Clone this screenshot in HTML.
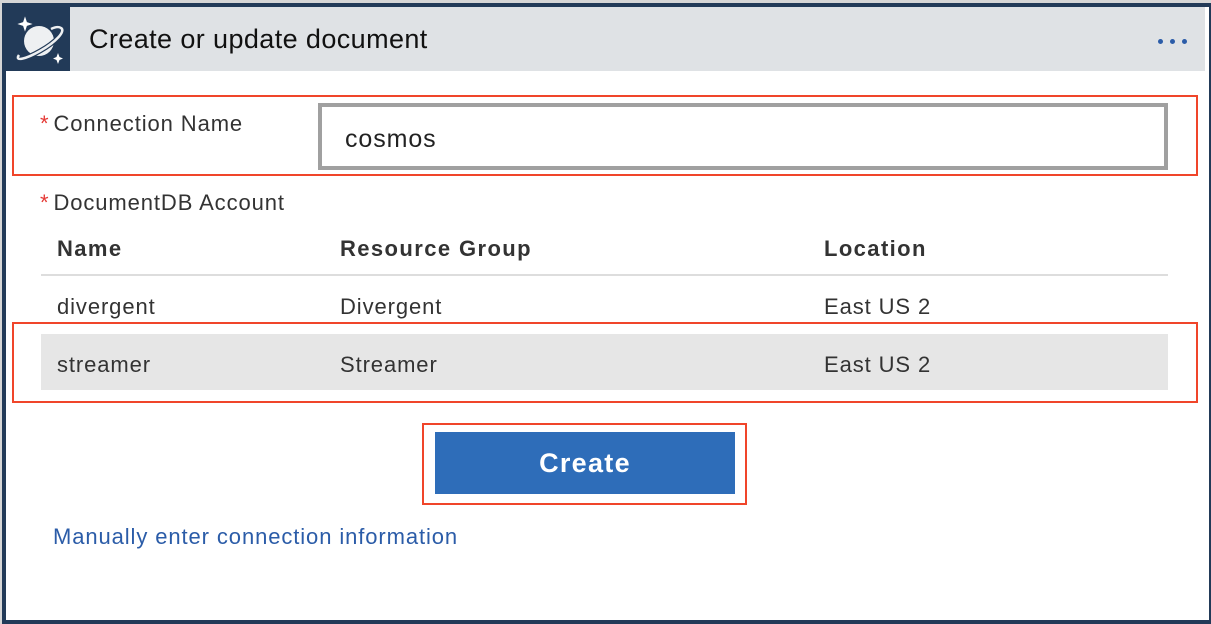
<!DOCTYPE html>
<html><head><meta charset="utf-8"><style>
body{margin:0;width:1211px;height:623px;background:#d6d6d6;position:relative;overflow:hidden;font-family:"Liberation Sans",sans-serif;}
.frame{position:absolute;left:2px;top:3px;width:1203px;height:613px;border:4px solid #223a58;background:#fff;}
.abs{position:absolute;}
.t{position:absolute;color:#333;font-size:22px;white-space:nowrap;letter-spacing:0.9px;}
.b{font-weight:bold;letter-spacing:1.4px;}
.red{position:absolute;border:2px solid #f0452a;}
.star{color:#e53935;margin-right:4px;}
</style></head><body>
<div class="frame"></div>
<div class="abs" style="left:6px;top:7px;width:64px;height:64px;background:#223a58;">
<svg width="64" height="64" viewBox="0 0 64 64">
<circle cx="33" cy="34" r="15" fill="#eef0f2"/>
<path d="M13 48 C8 55 20 52 34 44 C50 35 60 24 55 21" fill="none" stroke="#223a58" stroke-width="5"/>
<path d="M13 48 C8 55 20 52 34 44 C50 35 60 24 55 21 C52 19 47 21 45 22" fill="none" stroke="#eef0f2" stroke-width="2.5"/>
<path d="M20 12 L22 18 L28 20 L22 22 L20 28 L18 22 L12 20 L18 18Z" fill="#fff" transform="translate(0,-2) scale(0.95)"/>
<path d="M52 46 L53.5 50 L57 51.5 L53.5 53 L52 57 L50.5 53 L47 51.5 L50.5 50Z" fill="#fff"/>
</svg></div>
<div class="abs" style="left:70px;top:7px;width:1135px;height:64px;background:#dfe2e5;"></div>
<div class="t" style="left:89px;top:24px;font-size:27px;color:#111;letter-spacing:0.4px;">Create or update document</div>
<div class="abs" style="left:1158px;top:39px;width:5px;height:5px;border-radius:50%;background:#2b5ca8;box-shadow:12px 0 #2b5ca8,24px 0 #2b5ca8;"></div>

<div class="red" style="left:12px;top:95px;width:1182px;height:77px;"></div>
<div class="t" style="left:40px;top:111px;"><span class="star">*</span>Connection Name</div>
<div class="abs" style="left:318px;top:103px;width:842px;height:59px;border:4px solid #a0a0a0;"></div>
<div class="t" style="left:345px;top:125px;font-size:25px;color:#222;">cosmos</div>

<div class="t" style="left:40px;top:190px;"><span class="star">*</span>DocumentDB Account</div>
<div class="t b" style="left:57px;top:236px;">Name</div>
<div class="t b" style="left:340px;top:236px;">Resource Group</div>
<div class="t b" style="left:824px;top:236px;">Location</div>
<div class="abs" style="left:41px;top:274px;width:1127px;height:2px;background:#ddd;"></div>
<div class="t" style="left:57px;top:294px;">divergent</div>
<div class="t" style="left:340px;top:294px;">Divergent</div>
<div class="t" style="left:824px;top:294px;">East US 2</div>
<div class="red" style="left:12px;top:322px;width:1182px;height:77px;"></div>
<div class="abs" style="left:41px;top:334px;width:1127px;height:56px;background:#e6e6e6;"></div>
<div class="t" style="left:57px;top:352px;">streamer</div>
<div class="t" style="left:340px;top:352px;">Streamer</div>
<div class="t" style="left:824px;top:352px;">East US 2</div>

<div class="red" style="left:422px;top:423px;width:321px;height:78px;"></div>
<div class="abs" style="left:435px;top:432px;width:300px;height:62px;background:#2e6db9;color:#fff;font-size:27px;font-weight:bold;text-align:center;line-height:62px;letter-spacing:1.3px;">Create</div>
<div class="t" style="left:53px;top:524px;color:#2b5ca8;">Manually enter connection information</div>
</body></html>
